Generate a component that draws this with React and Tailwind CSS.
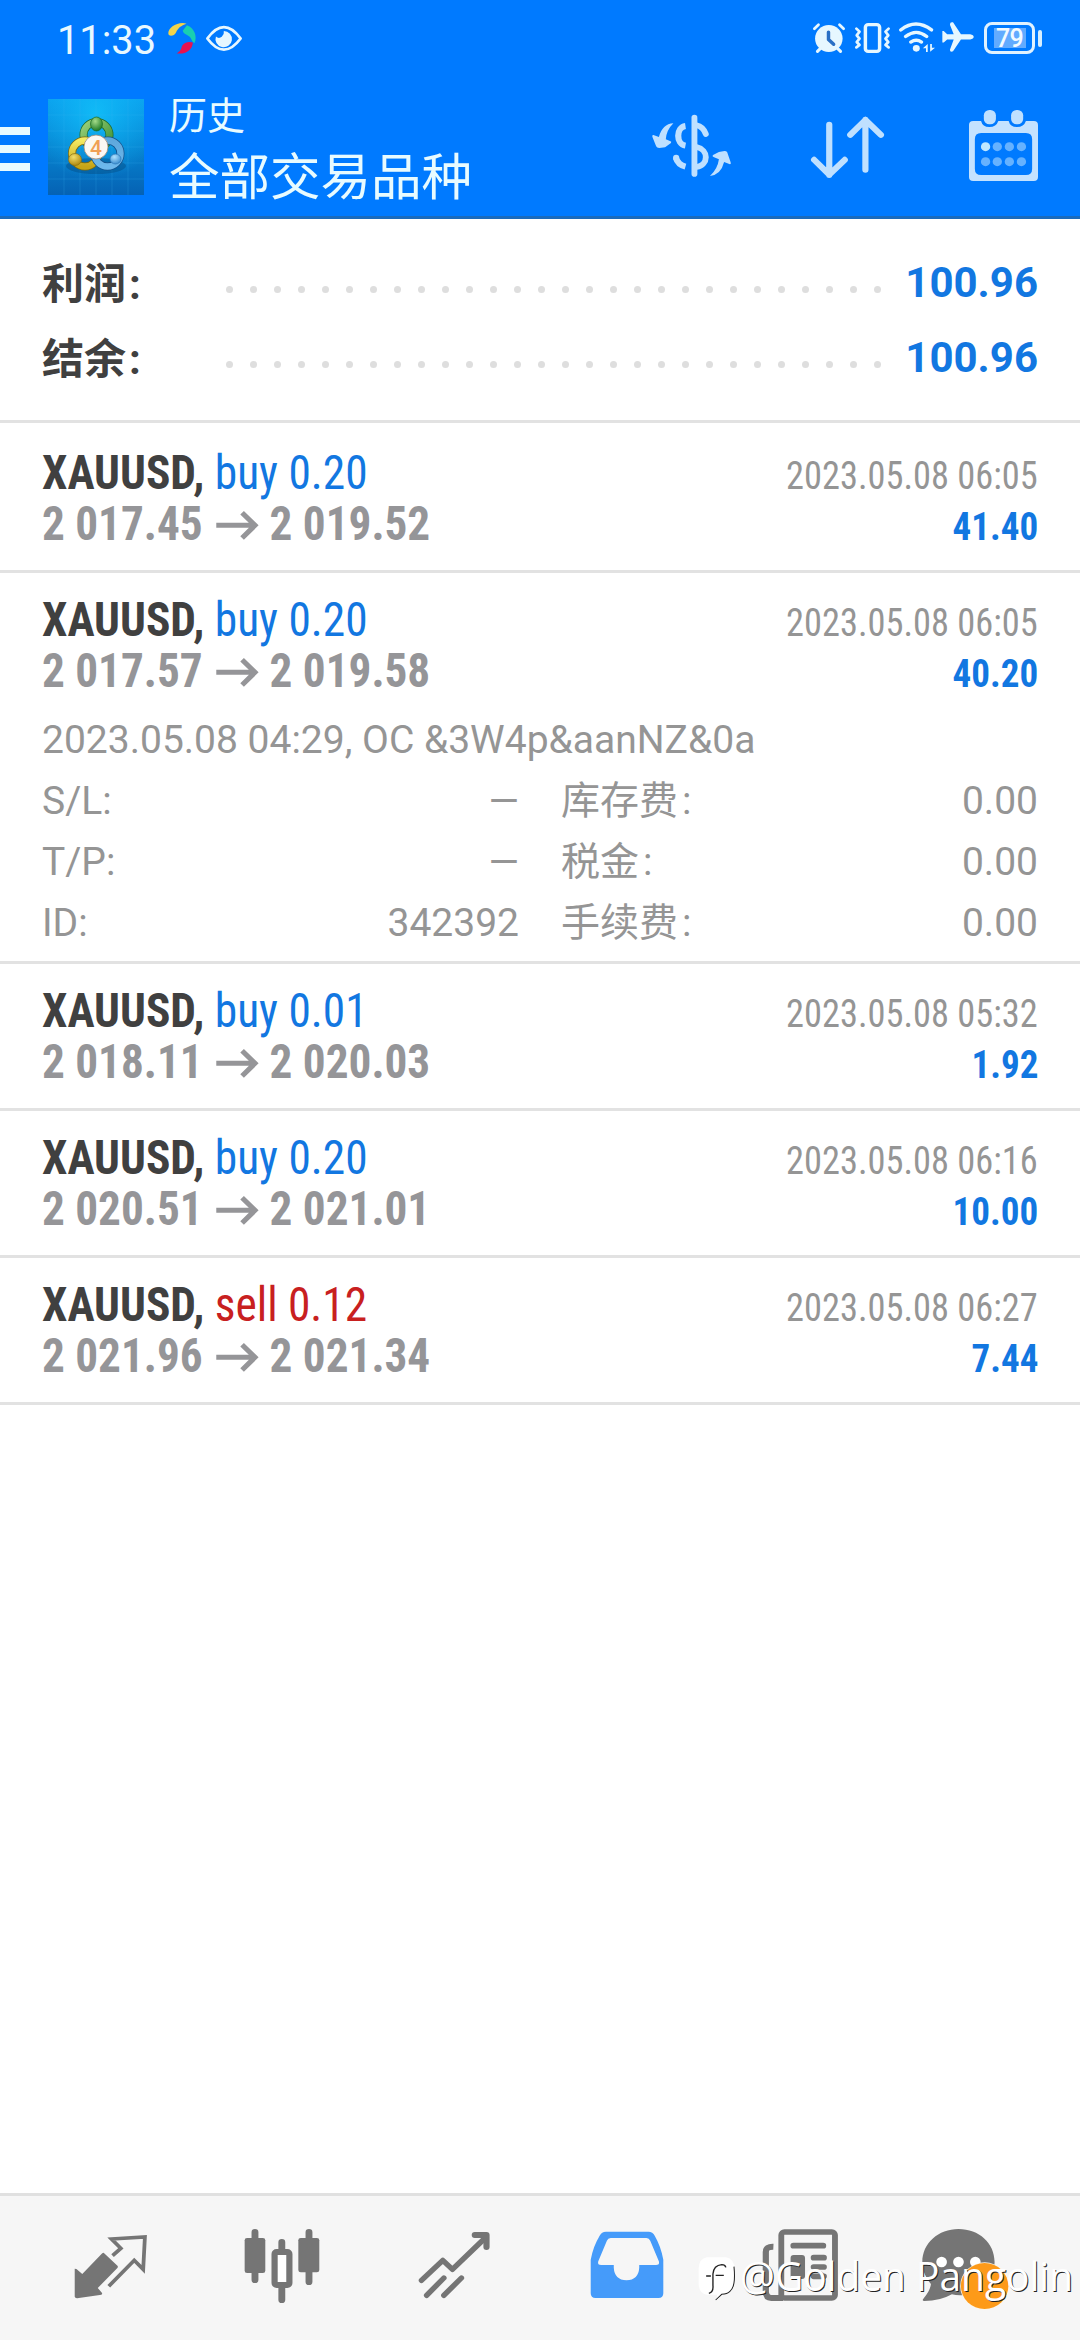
import React from "react";

const deals = [
  { type: "buy", lots: "0.20", open: "2 017.45", close: "2 019.52", time: "2023.05.08 06:05", profit: "41.40" },
  {
    type: "buy", lots: "0.20", open: "2 017.57", close: "2 019.58", time: "2023.05.08 06:05", profit: "40.20",
    comment: "2023.05.08 04:29, OC &3W4p&aanNZ&0a",
    details: [
      ["S/L:", "—", "库存费", "0.00"],
      ["T/P:", "—", "税金", "0.00"],
      ["ID:", "342392", "手续费", "0.00"],
    ],
  },
  { type: "buy", lots: "0.01", open: "2 018.11", close: "2 020.03", time: "2023.05.08 05:32", profit: "1.92" },
  { type: "buy", lots: "0.20", open: "2 020.51", close: "2 021.01", time: "2023.05.08 06:16", profit: "10.00" },
  { type: "sell", lots: "0.12", open: "2 021.96", close: "2 021.34", time: "2023.05.08 06:27", profit: "7.44" },
];

function Art({ box, className, children }) {
  return (
    <svg viewBox={box} preserveAspectRatio="none" className={"block shrink-0 overflow-visible " + className} fill="none">
      {children}
    </svg>
  );
}

function StatusBar() {
  const c = "#e6f7ff";
  return (
    <div className="flex h-[75px] items-start pl-[57px] pr-[38px] pt-[22px]">
      <div className="h-[35px] w-[111px] whitespace-nowrap text-[41px] leading-[36px]">
        <span className="inline-block origin-left scale-x-[0.97]">11:33</span>
      </div>
      <Art box="487 68 80 92" className="mt-[1px] h-[31px] w-[28px]">
        <path d="M540 70C518 62 486 80 488 100c2 10 18 6 22-4 6-14 14-20 30-26z" fill="#f2d44a" />
        <path d="M541 75c22 8 30 34 22 52-8-2-8-14-16-20-10-6-16-8-18-16z" fill="#19cfb0" />
        <path d="M558 126c-2 26-24 36-47 32 12-6 14-14 16-22 6-12 22-14 31-10z" fill="#e8114f" />
      </Art>
      <Art box="596 78 105 74" className="ml-[10px] mt-[4px] h-[25px] w-[36px]">
        <path d="M600 115Q648 48 697 115Q648 181 600 115z" stroke={c} strokeWidth="8" strokeLinejoin="round" />
        <path d="M648 93a24 24 0 1 1-23 16q8 8 17 1 8-8 6-17z" fill={c} />
      </Art>
      <div className="flex-1" />
      <Art box="793 70 93 89" className="mt-[1px] h-[30px] w-[32px]">
        <circle cx="839" cy="116" r="40" fill={c} />
        <path d="M797 87l12-12M882 87l-12-12" stroke={c} strokeWidth="8" strokeLinecap="round" />
        <path d="M806 154l8-8M873 154l-8-8" stroke={c} strokeWidth="9" strokeLinecap="round" />
        <path d="M838 97v22l15 14" stroke="#2a6fc4" strokeWidth="10" strokeLinecap="round" strokeLinejoin="round" />
      </Art>
      <Art box="915 69 101 90" className="ml-[10px] mt-[1px] h-[30px] w-[35px]">
        <rect x="945" y="74" width="41" height="80" rx="8" stroke={c} strokeWidth="10" />
        <path d="M919 86l9 9-8 11 8 10-8 10 8 9-9 7M1012 86l-9 9 8 11-8 10 8 10-8 9 9 7" stroke={c} strokeWidth="8" strokeLinecap="round" strokeLinejoin="round" />
      </Art>
      <Art box="1042 66 104 91" className="ml-[9px] mt-0 h-[30px] w-[36px]">
        <path d="M1047 90q44-36 89 0M1061 110q31-25 61 0M1076 127q16-11 31 0" stroke={c} strokeWidth="10" strokeLinecap="round" />
        <circle cx="1092" cy="146" r="10" fill={c} />
        <path d="M1111 146l14-13v24h-5v-11zM1146 144l-14 12v-23h5v11z" fill={c} />
      </Art>
      <Art box="1166 67 90 89" className="ml-[7px] mt-0 h-[30px] w-[31px]">
        <path d="M1167 94h4l10 9h19l-11-28q0-9 9-7l23 35h27q10 2 10 8t-10 8h-27l-23 35q-9 4-9-5l11-30h-19l-10 9h-4z" fill={c} />
      </Art>
      <div className="ml-[11px] flex items-center">
        <div className="flex h-[32px] w-[51px] items-center justify-center rounded-[8px] border-[3px] border-[#e0f2ff]">
          <div className="h-[20px] w-[32px] bg-[#62abff] text-center text-[25px] leading-[21px] font-medium tracking-tight text-[#f2faff]">79</div>
        </div>
        <div className="ml-[3px] h-[17px] w-[4px] rounded-sm bg-[#d8efff]" />
      </div>
    </div>
  );
}

function AppLogo() {
  return (
    <svg viewBox="0 0 96 96" className="mt-[3px] ml-[18px] block h-[96px] w-[96px] shrink-0">
      <defs>
        <linearGradient id="bg" x1="0" y1="0" x2="0" y2="1">
          <stop offset="0" stopColor="#0a9fec" /><stop offset=".45" stopColor="#0787d2" /><stop offset="1" stopColor="#0562b4" />
        </linearGradient>
        <radialGradient id="glow" cx=".5" cy=".15" r=".7">
          <stop offset="0" stopColor="#12c4fb" stopOpacity=".8" /><stop offset="1" stopColor="#12b4fb" stopOpacity="0" />
        </radialGradient>
        <linearGradient id="green" x1="0" y1="0" x2="1" y2="1"><stop offset="0" stopColor="#9ad07a" /><stop offset="1" stopColor="#3c9034" /></linearGradient>
        <linearGradient id="gold" x1="0" y1="0" x2="0" y2="1"><stop offset="0" stopColor="#f5ea62" /><stop offset="1" stopColor="#c7a416" /></linearGradient>
        <linearGradient id="sky" x1="0" y1="0" x2="0" y2="1"><stop offset="0" stopColor="#5ea8dc" /><stop offset="1" stopColor="#6db8ec" /></linearGradient>
        <radialGradient id="knobG" cx=".4" cy=".3" r=".7"><stop offset="0" stopColor="#a5dc8a" /><stop offset="1" stopColor="#1f7a26" /></radialGradient>
        <radialGradient id="knobY" cx=".4" cy=".3" r=".7"><stop offset="0" stopColor="#f3df6a" /><stop offset="1" stopColor="#b08a12" /></radialGradient>
        <radialGradient id="knobB" cx=".4" cy=".3" r=".7"><stop offset="0" stopColor="#b0e2ff" /><stop offset="1" stopColor="#3d8fd0" /></radialGradient>
      </defs>
      <rect width="96" height="96" fill="url(#bg)" />
      <rect width="96" height="96" fill="url(#glow)" />
      <path d="M0 16h96M0 32h96M0 48h96M0 64h96M0 80h96M16 0v96M32 0v96M48 0v96M64 0v96M80 0v96" stroke="#3fb4ee" strokeOpacity=".2" />
      <ellipse cx="48" cy="67" rx="30" ry="8" fill="#03406f" opacity=".35" />
      <g fill="none">
        <circle cx="48.500" cy="36" r="13" stroke="#1f6a2a" strokeWidth="8" />
        <circle cx="48.500" cy="36" r="13" stroke="url(#green)" strokeWidth="6.500" />
        <circle cx="37" cy="54.500" r="13" stroke="#7a6a10" strokeWidth="8" />
        <circle cx="37" cy="54.500" r="13" stroke="url(#gold)" strokeWidth="6.500" />
        <circle cx="59.500" cy="54.500" r="13" stroke="#15528c" strokeWidth="8" />
        <circle cx="59.500" cy="54.500" r="13" stroke="url(#sky)" strokeWidth="6.500" />
      </g>
      <ellipse cx="48.500" cy="25" rx="6" ry="7" fill="url(#knobG)" stroke="#1d6a24" strokeWidth=".7" />
      <ellipse cx="27" cy="60.500" rx="6.500" ry="6" fill="url(#knobY)" stroke="#8a7014" strokeWidth=".7" />
      <ellipse cx="67.500" cy="60" rx="5.500" ry="5" fill="url(#knobB)" stroke="#2a74b4" strokeWidth=".7" />
      <circle cx="48" cy="48" r="12" fill="#fbf8f3" stroke="#a08a78" strokeWidth=".8" />
      <text x="48" y="55.500" textAnchor="middle" fontFamily="Roboto" fontSize="21" fontWeight="500" fill="#f0a055">4</text>
    </svg>
  );
}

function Toolbar() {
  const c = "#bfe0ff";
  return (
    <div className="flex h-[141px] items-center pr-[42px]">
      <div className="mt-[7px] flex w-[30px] flex-col gap-[10px]">
        <span className="h-[8px] bg-[#e8fbff]" />
        <span className="h-[8px] bg-[#e8fbff]" />
        <span className="h-[8px] bg-[#e8fbff]" />
      </div>
      <AppLogo />
      <div className="ml-[25px] mt-[8px] flex-1 whitespace-nowrap text-[#e8fbff]">
        <div className="text-[38px] leading-[55px]">历史</div>
        <div className="text-[50.500px] leading-[67px]">全部交易品种</div>
      </div>
      <Art box="321 345 229 180" className="h-[60px] w-[79px]">
        <path d="M383 367q-32 2-42 41l-16-6q-4-1-3 5l11 29q2 5 9 5l17-2 17-13q3-4-3-6l-12-5q2-28 22-48z" fill={c} />
        <path d="M489 525q32-4 41-42l17 7q4 0 2-6l-10-30q-2-4-8-4l-16 3-17 9q-4 4 3 7l14 6q-4 30-26 50z" fill={c} />
        <path d="M444 350v169" stroke={c} strokeWidth="17" strokeLinecap="round" />
        <path d="M418 375c-28 4-28 54 0 59M390 470q6 21 28 27" stroke={c} strokeWidth="18" />
        <circle cx="391" cy="470" r="9" fill={c} />
        <path d="M450 373q19 4 27 26M450 438c36 8 36 54 0 60" stroke={c} strokeWidth="17" strokeLinecap="round" />
      </Art>
      <Art box="783 345 212 190" className="ml-[80px] mt-[3px] h-[63px] w-[73px]">
        <path d="M836 371v152M792 477l44 45 45-45M941 507V356M897 402l44-45 45 45" stroke={c} strokeWidth="18" strokeLinecap="round" strokeLinejoin="round" />
      </Art>
      <Art box="1243 330 200 213" className="ml-[85px] h-[71px] w-[69px]">
        <path fillRule="evenodd" d="M1255 363h23q4 18 24 18t26-18h30q4 18 24 18t26-18h23q12 0 12 12v156q0 12-12 12h-176q-12 0-12-12V375q0-12 12-12zm23 36q-18 0-18 18v90q0 18 18 18h130q18 0 18-18v-90q0-18-18-18z" fill="#c4e2ff" />
        <rect x="1286" y="330" width="35" height="43" rx="16" fill={c} />
        <rect x="1365" y="330" width="35" height="43" rx="16" fill={c} />
        {[440, 485].map((y) => [1291, 1325, 1360, 1395].map((x) => (
          <circle key={x + "-" + y} cx={x} cy={y} r="13.500" fill={x === 1291 && y === 440 ? "#bfe8ff" : "#66b2ff"} />
        )))}
      </Art>
    </div>
  );
}

function SummaryLine({ label, value }) {
  return (
    <div className="flex h-[75px] items-center">
      <div className="mt-[3px] w-[184px] text-[42px] leading-[75px] font-bold text-[#404040]">
        {label}<span className="ml-[3px]">:</span>
      </div>
      <div className="mt-[13px] flex w-[655px] justify-between">
        {Array.from({ length: 28 }, (_, i) => (
          <span key={i} className="h-[7px] w-[7px] rounded-full bg-[#dedede]" />
        ))}
      </div>
      <div className="flex-1 text-right text-[42px] leading-[75px] font-bold text-[#1277e1]">{value}</div>
    </div>
  );
}

function Deal({ deal }) {
  return (
    <div className="border-b-[3px] border-[#e2e2e2] px-[42px] pt-[21px]">
      <div className="flex h-[51px] items-baseline justify-between whitespace-nowrap leading-[51px] [font-stretch:75%]">
        <div className="origin-left scale-x-[0.945] text-[48px]">
          <span className="font-bold text-[#404040]">XAUUSD,</span>{" "}
          <span className={deal.type === "buy" ? "text-[#1277e1]" : "text-[#c8201f]"}>{deal.type} {deal.lots}</span>
        </div>
        <div className="origin-right scale-x-[0.933] text-[39px] text-[#959595]">{deal.time}</div>
      </div>
      <div className="flex h-[51px] items-baseline justify-between whitespace-nowrap leading-[51px] font-bold [font-stretch:75%]">
        <div className="flex origin-left scale-x-[0.942] items-baseline text-[48px] text-[#959598]">
          <span>{deal.open}</span>
          <Art box="624 855 122 87" className="ml-[14px] mr-[13px] h-[29px] w-[44px]">
            <path d="M624 898h112M700 860l38 38-38 38" stroke="#959598" strokeWidth="15" />
          </Art>
          <span>{deal.close}</span>
        </div>
        <div className="origin-right scale-x-[0.95] text-[39px] text-[#1277e1]">{deal.profit}</div>
      </div>
      {deal.details ? (
        <div className="pt-[14px] pb-[7px] text-[39px] leading-[61px] text-[#959595]">
          <div>{deal.comment}</div>
          {deal.details.map((d) => (
            <div key={d[0]} className="grid h-[61px] grid-cols-2 gap-x-[42px]">
              <div className="flex justify-between"><span>{d[0]}</span><span>{d[1]}</span></div>
              <div className="flex justify-between">
                <span>{d[2]}<span className="ml-[4px]">:</span></span>
                <span>{d[3]}</span>
              </div>
            </div>
          ))}
        </div>
      ) : (
        <div className="h-[21px]" />
      )}
    </div>
  );
}

function NavIcon({ box, children }) {
  return (
    <div className="flex flex-1 justify-center">
      <Art box={box} className="mb-[4px] h-[74px] w-[75px]">{children}</Art>
    </div>
  );
}

function BottomNav() {
  const g = "#757575";
  return (
    <div className="relative flex h-[147px] items-center border-t-[3px] border-[#e0e0e0] bg-[#f6f6f6] px-[24px]">
      <NavIcon box="210 147 218 222">
        <path d="M299 218l41 40q1 4-1 6l-57 60 13 16-2 4-66 10q-9 2-12-4v-84l5 1 17 15 58-62z" fill={g} />
        <path d="M325 227l24-22-27-28 97-6-5 97-26-27-74 78" stroke={g} strokeWidth="11" />
      </NavIcon>
      <NavIcon box="710 147 218 222">
        <path d="M739 157v142M896 157v148M817 187v30M817 320v39" stroke={g} strokeWidth="20" strokeLinecap="round" />
        <rect x="709" y="174" width="60" height="105" rx="7" fill={g} />
        <rect x="865" y="174" width="61" height="103" rx="7" fill={g} />
        <rect x="796" y="216" width="43" height="99" rx="6" stroke={g} strokeWidth="18" fill="#fff" />
      </NavIcon>
      <NavIcon box="1209 147 218 222">
        <path d="M1222 301l62-60 28 27 98-97M1237 346l50-52M1287 346l51-52" stroke={g} strokeWidth="16" strokeLinecap="round" strokeLinejoin="round" />
        <path d="M1377 165h34v36" stroke={g} strokeWidth="18" strokeLinecap="round" strokeLinejoin="round" />
      </NavIcon>
      <NavIcon box="141 147 218 222">
        <path fillRule="evenodd" d="M190 155h124q12 0 18 12 18 32 25 72v101q0 14-14 14H160q-14 0-14-14V239q7-40 26-72 6-12 18-12zm14 19q-8 0-11 8l-25 62q-3 11 8 11h37v8q2 36 37 38 35-2 37-38v-8h49q11 0 8-11l-25-62q-3-8-11-8z" fill="#459bfa" />
      </NavIcon>
      <NavIcon box="640 147 218 222">
        <path d="M676 200q-22-1-22 16v118q0 20 16 20h34" stroke={g} strokeWidth="18" />
        <rect x="699" y="156" width="156" height="198" rx="9" stroke={g} strokeWidth="17" />
        <path d="M734 197h87M793 233h30M793 261h30M793 289h30" stroke={g} strokeWidth="17" strokeLinecap="round" />
        <rect x="726" y="225" width="42" height="72" rx="9" fill={g} />
      </NavIcon>
      <NavIcon box="1139 147 218 222">
        <path d="M1213 147c60 0 105 42 105 99s-46 100-100 100q-14 0-24-3-34 20-80 20-8 0-3-7 20-24 22-44c-14-18-25-38-25-66 0-57 47-99 105-99z" fill={g} />
        <circle cx="1164" cy="246" r="15.500" fill="#fff" />
        <circle cx="1213" cy="246" r="15.500" fill="#fff" />
        <circle cx="1262" cy="246" r="15.500" fill="#fff" />
        <circle cx="1289" cy="318" r="71" fill="#fff6e6" />
        <circle cx="1289" cy="318" r="69" fill="#fd9a19" />
      </NavIcon>
      <div className="absolute left-[698px] top-[60px] flex items-start">
        <Art box="458 236 109 132" className="h-[44px] w-[37px]">
          <path d="M484 240h56q26 4 26 38v34q0 36-30 38l-22 18v-16h-28q-24-2-26-30v-50q2-28 24-32z" fill="#fff" />
          <path d="M564 268q6 60-12 74-8 8-24 9l-18 17" stroke="#222" strokeWidth="3" />
          <path d="M490 348q14-4 12-24v-34q2-26 26-28 10 0 12 8M482 296h14M510 294h24" stroke="#222" strokeWidth="4" />
        </Art>
        <div className="ml-[5px] -mt-[2px] w-[335px] whitespace-nowrap font-['Open_Sans'] text-[40px] leading-[44px] text-white [text-shadow:1px_1px_0_#222]">
          <span className="inline-block origin-left scale-x-[0.973]">@Golden Pangolin</span>
        </div>
      </div>
    </div>
  );
}

export default function App() {
  return (
    <div className="flex h-[2340px] w-[1080px] flex-col overflow-hidden bg-white font-[Roboto,'Noto_Sans_CJK_SC',sans-serif]">
      <header className="h-[219px] border-b-[3px] border-[#1a6bbd] bg-[#007aff] text-[#e8f8ff]">
        <StatusBar />
        <Toolbar />
      </header>
      <section className="h-[204px] border-b-[3px] border-[#e2e2e2] px-[42px] pt-[26px]">
        <SummaryLine label="利润" value="100.96" />
        <SummaryLine label="结余" value="100.96" />
      </section>
      <main className="flex-1 pt-[3px]">
        {deals.map((d, i) => <Deal key={i} deal={d} />)}
      </main>
      <BottomNav />
    </div>
  );
}
